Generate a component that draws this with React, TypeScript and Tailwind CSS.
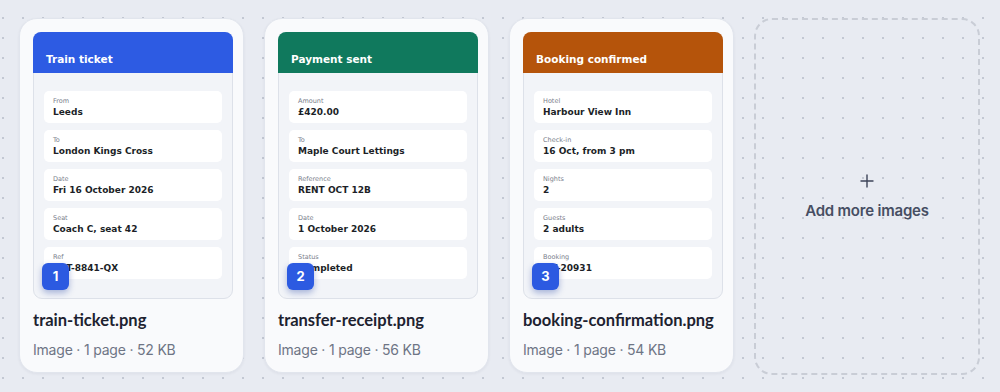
import React from "react";

type Row = { label: string; value: string };
type Doc = {
  title: string;
  color: string;
  rows: Row[];
  file: string;
  meta: string;
  n: number;
};

const docs: Doc[] = [
  {
    title: "Train ticket",
    color: "bg-[#2d5be3]",
    rows: [
      { label: "From", value: "Leeds" },
      { label: "To", value: "London Kings Cross" },
      { label: "Date", value: "Fri 16 October 2026" },
      { label: "Seat", value: "Coach C, seat 42" },
      { label: "Ref", value: "LNT-8841-QX" },
    ],
    file: "train-ticket.png",
    meta: "Image · 1 page · 52 KB",
    n: 1,
  },
  {
    title: "Payment sent",
    color: "bg-[#10795d]",
    rows: [
      { label: "Amount", value: "£420.00" },
      { label: "To", value: "Maple Court Lettings" },
      { label: "Reference", value: "RENT OCT 12B" },
      { label: "Date", value: "1 October 2026" },
      { label: "Status", value: "Completed" },
    ],
    file: "transfer-receipt.png",
    meta: "Image · 1 page · 56 KB",
    n: 2,
  },
  {
    title: "Booking confirmed",
    color: "bg-[#b5540b]",
    rows: [
      { label: "Hotel", value: "Harbour View Inn" },
      { label: "Check-in", value: "16 Oct, from 3 pm" },
      { label: "Nights", value: "2" },
      { label: "Guests", value: "2 adults" },
      { label: "Booking", value: "HV-20931" },
    ],
    file: "booking-confirmation.png",
    meta: "Image · 1 page · 54 KB",
    n: 3,
  },
];

function Card({ d }: { d: Doc }) {
  return (
    <div className="flex h-[355px] w-[225px] shrink-0 flex-col rounded-[18px] border border-[#e1e5ed] bg-[#f9fafc] p-[13px] shadow-[0_1px_3px_rgba(30,40,70,0.06)]">
      <div className="relative h-[267px] w-[200px] shrink-0 rounded-[9px] border border-[#dde1e9] bg-[#f2f4f8] font-['DejaVu_Sans',sans-serif]">
        <div className={`${d.color} -mx-px -mt-px flex h-[41px] items-end rounded-t-[8px] px-[13px] pb-[9px]`}>
          <span className="text-[10.5px] font-bold leading-none text-white">{d.title}</span>
        </div>
        <div className="flex flex-col gap-[7px] px-[10px] pt-[18px]">
          {d.rows.map((r) => (
            <div key={r.label} className="flex h-[32px] flex-col justify-center rounded-[5px] bg-white px-[9px]">
              <span className="text-[6.5px] leading-[9px] text-[#7a808c]">{r.label}</span>
              <span className="text-[9px] font-bold leading-[12px] text-[#1c1f27]">{r.value}</span>
            </div>
          ))}
        </div>
        <div className="absolute bottom-[8px] left-[8px] flex h-[27px] w-[27px] items-center justify-center rounded-[6px] bg-[#2c5ae1] font-['Inter',sans-serif] text-[13px] font-bold text-white shadow-[0_3px_6px_rgba(30,60,160,0.35)]">
          {d.n}
        </div>
      </div>
      <div className="mt-[11px] whitespace-nowrap font-['Lato',sans-serif] text-[16.5px] font-bold leading-[21px] text-[#1d2230]">
        {d.file}
      </div>
      <div className="mt-[10px] whitespace-nowrap font-['Inter',sans-serif] text-[14px] leading-[18px] tracking-[-0.2px] text-[#6e7585]">
        {d.meta}
      </div>
    </div>
  );
}

export default function App() {
  return (
    <div className="h-[392px] w-[1000px] bg-[#e8ebf2] bg-[radial-gradient(circle,#c3c8d3_1px,transparent_1.3px)] bg-[length:20px_20px] bg-[position:-7px_8px] px-[19px] pt-[18px]">
      <div className="flex gap-[20px]">
        {docs.map((d) => (
          <Card key={d.n} d={d} />
        ))}
        <div className="flex h-[357px] w-[226px] flex-col items-center justify-center rounded-[18px] border-2 border-dashed border-[#c9cdd6] pt-[8px]">
          <svg width="14" height="14" viewBox="0 0 14 14" className="mb-[12px] mt-[-4px]">
            <path d="M7 1v12M1 7h12" stroke="#3d4459" strokeWidth="1.4" strokeLinecap="round" />
          </svg>
          <span className="font-['Inter',sans-serif] text-[15px] font-semibold tracking-[-0.2px] text-[#464e63]">
            Add more images
          </span>
        </div>
      </div>
    </div>
  );
}
